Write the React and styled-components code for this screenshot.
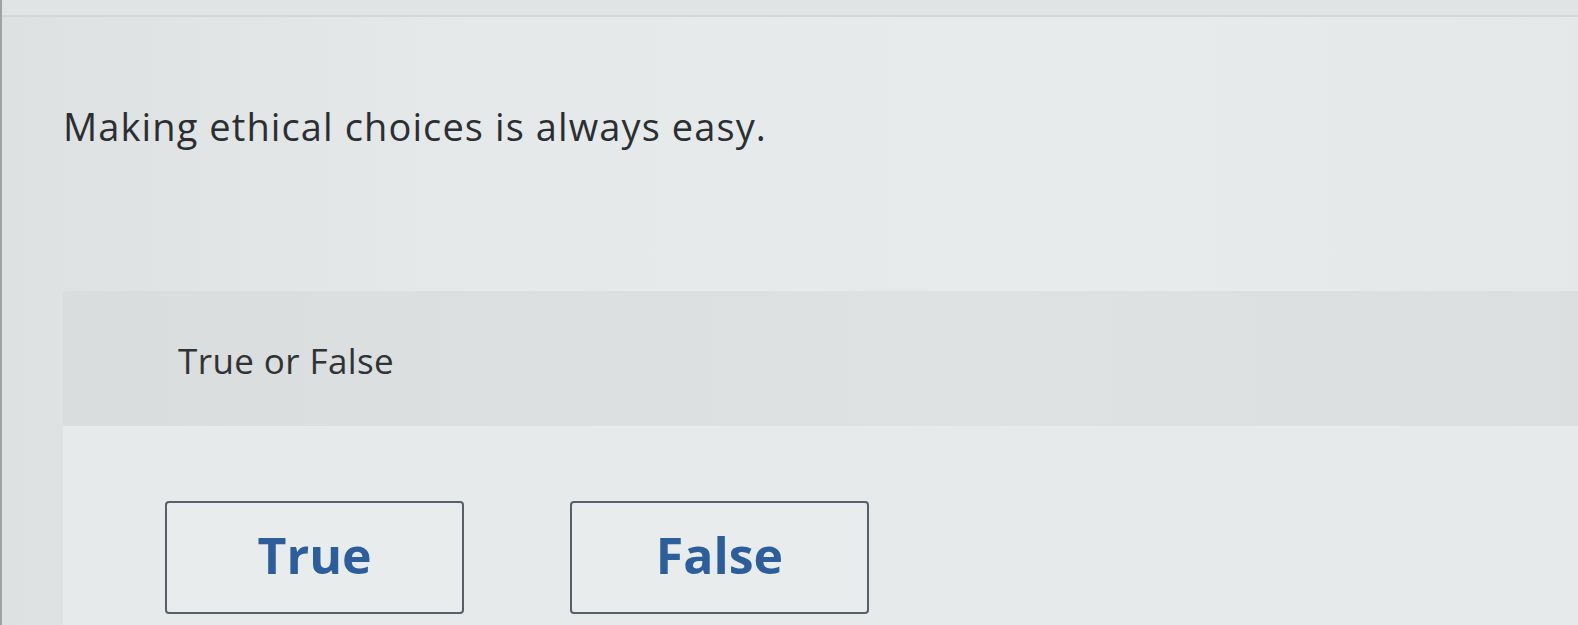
import React from 'react';
import styled, { createGlobalStyle } from 'styled-components';

const GlobalStyle = createGlobalStyle`
  html, body {
    margin: 0;
    padding: 0;
    background: #e3e7e7;
  }
  body {
    font-family: "Open Sans", Lato, "Liberation Sans", sans-serif;
  }
`;

const Screen = styled.div`
  width: 1578px;
  height: 625px;
  overflow: hidden;
  display: flex;
  flex-direction: column;
  background: linear-gradient(90deg, #dde1e1 0%, #e5e9e9 30%, #e7ebeb 70%, #e4e8e8 100%);
  border-left: 2px solid #9ea3a4;
  box-sizing: border-box;
`;

const TopStrip = styled.div`
  height: 15px;
  flex-shrink: 0;
  background: #e0e4e4;
  border-bottom: 2px solid #d3d7d7;
`;

const Question = styled.h1`
  margin: 83px 0 0 61px;
  font-size: 38px;
  font-weight: 400;
  line-height: normal;
  letter-spacing: 1.1px;
  color: #2b2f31;
`;

const AnswerArea = styled.section`
  margin: 139px 0 0 61px;
  flex: 1;
  display: flex;
  flex-direction: column;
  background: #e6eaea;
`;

const Instruction = styled.div`
  height: 135px;
  flex-shrink: 0;
  box-sizing: border-box;
  padding: 46px 0 0 115px;
  background: linear-gradient(90deg, #d9dddd 0%, #dee2e2 60%, #dbdfdf 100%);
  font-size: 35px;
  line-height: normal;
  letter-spacing: 0.4px;
  color: #2f3335;
`;

const Choices = styled.div`
  display: flex;
  gap: 106px;
  padding: 75px 0 0 102px;
`;

const Choice = styled.button`
  width: 299px;
  height: 113px;
  box-sizing: border-box;
  border: 2px solid #56606b;
  border-radius: 4px;
  background: #e8ecec;
  font-family: "Open Sans", Lato, "Liberation Sans", sans-serif;
  font-size: 50px;
  font-weight: 700;
  line-height: 1;
  color: #2c5e9c;
  cursor: pointer;
  padding: 0 0 6px;
`;

const App = () => (
  <>
    <GlobalStyle />
    <Screen>
      <TopStrip />
      <Question>Making ethical choices is always easy.</Question>
      <AnswerArea>
        <Instruction>True or False</Instruction>
        <Choices>
          <Choice type="button">True</Choice>
          <Choice type="button">False</Choice>
        </Choices>
      </AnswerArea>
    </Screen>
  </>
);

export default App;
